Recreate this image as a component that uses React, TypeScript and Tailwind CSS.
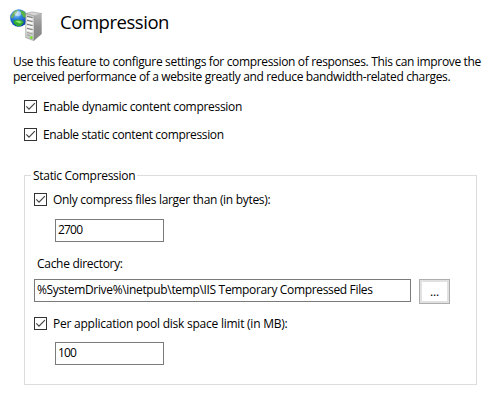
import type { ReactNode } from "react";

function ServerGlobeIcon() {
  return (
    <svg className="h-8 w-8 shrink-0" viewBox="0 0 32 32" aria-hidden="true">
      <defs>
        <radialGradient id="sea" cx="0.38" cy="0.25" r="0.75">
          <stop offset="0" stopColor="#b5e1fb" />
          <stop offset="0.4" stopColor="#2f83e0" />
          <stop offset="1" stopColor="#0a3fae" />
        </radialGradient>
        <linearGradient id="front" x1="0" y1="0" x2="0" y2="1">
          <stop offset="0" stopColor="#c9cbc9" />
          <stop offset="0.5" stopColor="#e4e5e3" />
          <stop offset="1" stopColor="#b9bbb8" />
        </linearGradient>
        <linearGradient id="side" x1="0" y1="0" x2="0" y2="1">
          <stop offset="0" stopColor="#b5b5b5" />
          <stop offset="0.5" stopColor="#8f8f8f" />
          <stop offset="1" stopColor="#858585" />
        </linearGradient>
      </defs>
      <circle cx="8.8" cy="9" r="8.7" fill="url(#sea)" />
      <path d="M2 5 4.8 1.8 8 .8 7 3.2 5.8 5 3.8 7.6 2.6 9.6 .8 8.5Z" fill="#6fae62" />
      <path d="M10.3 1 14 2.5 16.4 5.7 16.2 8.3 13.4 8.4 12.2 6.2 10.8 3.8Z" fill="#58b545" />
      <path d="M3.2 11.8 7 10.5 11.6 11.3 14 13 11.4 16.6 7.6 17.4 4.2 14.8Z" fill="#2faa33" />
      <path d="M5 12.2 8.5 11.5 12 12.9 9.6 14.4Z" fill="#8fe66c" />
      <ellipse cx="7.8" cy="4.5" rx="3.4" ry="2.6" fill="#fff" opacity=".4" />
      <path d="M15.6 4.6 22 2.9 31.7 4.5 24.3 6.8Z" fill="#d8d8d8" stroke="#858585" strokeWidth=".5" />
      <path d="M24 6.8 31.7 4.5V25L24 31.8Z" fill="url(#side)" />
      <path d="M15.6 4.6 24 6.8V31.8L15.6 28.8Z" fill="url(#front)" stroke="#858585" strokeWidth=".4" />
      <path d="M17 7.3 22.6 8.6M17 11.3 22.6 12.6M17 15.3 22.6 16.6M17 19.3 22.6 20.6" stroke="#686b69" strokeWidth=".9" />
      <path d="M17 9.2 22.6 10.5M17 13.2 22.6 14.5M17 17.2 22.6 18.5M17 21.2 22.6 22.5" stroke="#fafafa" strokeWidth="1.4" />
      <path d="M17 23.4 22.6 25M17 25.6 20 26.6" stroke="#8f918f" strokeWidth=".8" />
      <circle cx="21.3" cy="28.6" r="1.4" fill="#77e52b" />
    </svg>
  );
}

function CheckRow({ children, className }: { children: ReactNode; className?: string }) {
  return (
    <label className={`flex h-[15px] items-center ${className ?? ""}`}>
      <svg className="mr-1.5 h-[13px] w-[13px] shrink-0" viewBox="0 0 13 13" aria-hidden="true">
        <rect x=".5" y=".5" width="12" height="12" fill="#fff" stroke="#333" />
        <path d="M2.3 6.4 5 9.1 10.9 3.2" fill="none" stroke="#444" strokeWidth="1.2" />
      </svg>
      {children}
    </label>
  );
}

export default function App() {
  return (
    <main className="h-[418px] w-[490px] overflow-hidden bg-white font-['Open_Sans','Noto_Sans',sans-serif] text-[12px] leading-[15px] whitespace-nowrap text-black">
      <header className="flex h-[45px] pt-[9px] pl-[10px]">
        <ServerGlobeIcon />
        <h1 className="ml-[18px] text-[18.5px] leading-[25px] tracking-[-0.45px]">Compression</h1>
      </header>

      <div className="mt-[9px] flex flex-col pl-[13px]">
        <span className="h-[15px] leading-[15px] tracking-[-0.34px]">Use this feature to configure settings for compression of responses. This can improve the</span>
        <span className="h-[15px] leading-[15px] tracking-[-0.35px]">perceived performance of a website greatly and reduce bandwidth-related charges.</span>
      </div>

      <div className="mt-[15px] flex flex-col gap-[13px] pl-[24px]">
        <CheckRow><span className="tracking-[-0.31px]">Enable dynamic content compression</span></CheckRow>
        <CheckRow><span className="tracking-[-0.34px]">Enable static content compression</span></CheckRow>
      </div>

      <fieldset className="mt-[26px] ml-[24px] h-[217px] w-[453px] border border-[#dcdcdc] pl-[9px]">
        <legend className="-ml-[3px] h-[15px] px-[2px] tracking-[-0.3px]">Static Compression</legend>
        <CheckRow className="mt-[9px]"><span className="tracking-[-0.31px]">Only compress files larger than (in bytes):</span></CheckRow>
        <div className="mt-[12px] ml-[21px] h-[23px] w-[109px] border border-[#7a7a7a] pt-[2px] pl-[2px] tracking-[-0.8px]">2700</div>
        <div className="mt-[14px] pl-[3px] tracking-[-0.3px]">Cache directory:</div>
        <div className="mt-[8px] flex">
          <div className="h-[23px] w-[377px] border border-[#7a7a7a] pt-[2px] pl-[2px] tracking-[-0.34px]">%SystemDrive%\inetpub\temp\IIS Temporary Compressed Files</div>
          <button className="ml-[8px] h-[25px] w-[31px] border border-[#adadad] bg-white text-center leading-[21px] tracking-[-0.2px] shadow-[inset_0_0_0_2px_#e1e1e1]">...</button>
        </div>
        <CheckRow className="mt-[12px]"><span className="tracking-[-0.24px]">Per application pool disk space limit (in MB):</span></CheckRow>
        <div className="mt-[11px] ml-[21px] h-[23px] w-[109px] border border-[#7a7a7a] pt-[2px] pl-[2px] tracking-[-0.8px]">100</div>
      </fieldset>
    </main>
  );
}
